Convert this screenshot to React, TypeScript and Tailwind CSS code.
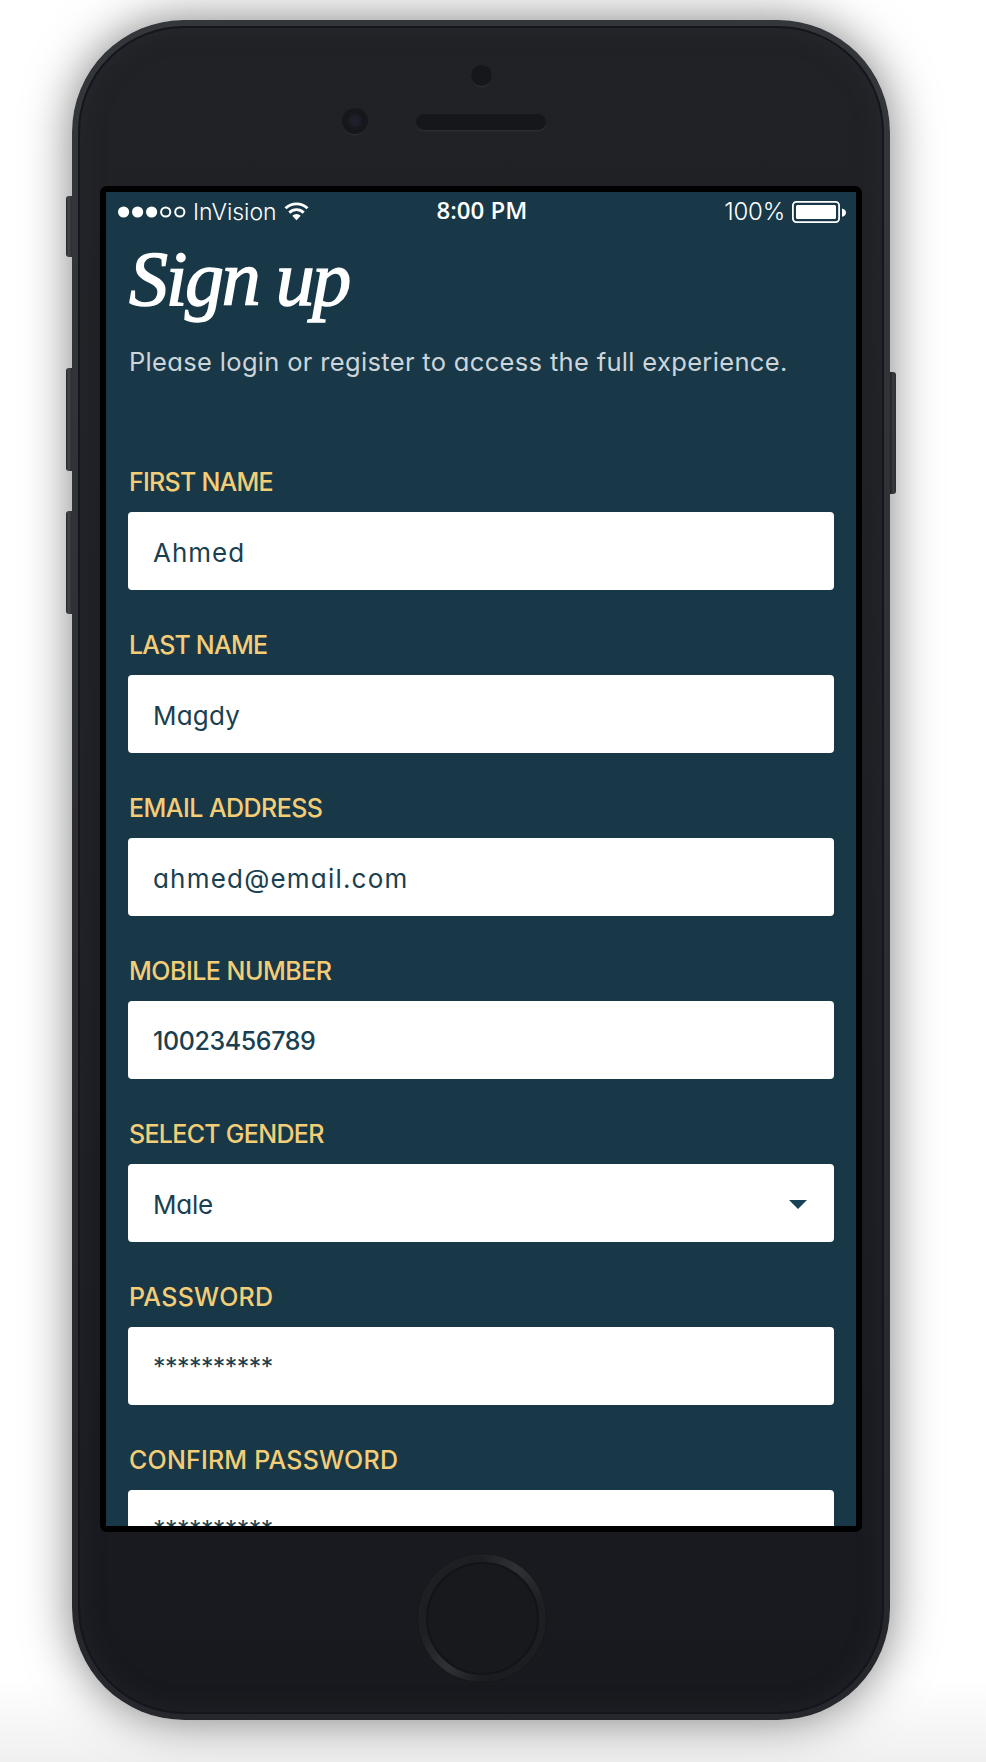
type Field = {
  label: string;
  labelStyle: string;
  value: string;
  valueStyle: string;
  select?: boolean;
};

const fields: Field[] = [
  { label: "FIRST NAME", labelStyle: "tracking-[-0.75px]", value: "Ahmed", valueStyle: "text-[26px] tracking-[1px]" },
  { label: "LAST NAME", labelStyle: "tracking-[-0.8px]", value: "Magdy", valueStyle: "text-[26px] tracking-[0.2px]" },
  { label: "EMAIL ADDRESS", labelStyle: "tracking-[-0.55px]", value: "ahmed@email.com", valueStyle: "text-[26px] tracking-[1.2px]" },
  { label: "MOBILE NUMBER", labelStyle: "tracking-[-0.5px]", value: "10023456789", valueStyle: "text-[25px] font-medium tracking-[-0.4px]" },
  { label: "SELECT GENDER", labelStyle: "tracking-[-0.7px]", value: "Male", valueStyle: "text-[26px] tracking-[-0.2px]", select: true },
  { label: "PASSWORD", labelStyle: "tracking-[0.25px]", value: "**********", valueStyle: "text-[25px] tracking-[-0.55px]" },
  { label: "CONFIRM PASSWORD", labelStyle: "tracking-[0.2px]", value: "**********", valueStyle: "text-[25px] tracking-[-0.55px]" },
];

function StatusBar() {
  return (
    <div className="grid h-[39px] grid-cols-3 grid-rows-[39px] items-center pl-3 pr-[10px] text-[23px] leading-8 text-white">
      <div className="flex items-center">
        <svg width="68" height="12" viewBox="0 0 68 12" fill="white">
          <circle cx="5.6" cy="6" r="5.6" />
          <circle cx="19.6" cy="6" r="5.6" />
          <circle cx="33.6" cy="6" r="5.6" />
          <circle cx="47.7" cy="6" r="4.6" fill="none" stroke="white" strokeWidth="2" />
          <circle cx="61.8" cy="6" r="4.6" fill="none" stroke="white" strokeWidth="2" />
        </svg>
        <span className="ml-[7px] pt-px font-light">InVision</span>
        <svg className="mb-px ml-[7px]" width="25" height="19" viewBox="0 0 25 19" fill="none" stroke="white">
          <path d="M1.5 6.3 A15.8 15.8 0 0 1 23.5 6.3" strokeWidth="2.9" />
          <path d="M5.3 10.6 A10.3 10.3 0 0 1 19.7 10.6" strokeWidth="2.9" />
          <path d="M12.5 18.3 L8.3 13.8 A6 6 0 0 1 16.7 13.8 Z" fill="white" stroke="none" />
        </svg>
      </div>
      <div className="pb-[3px] text-center font-['Open_Sans',sans-serif] text-[24px] font-semibold">8:00 PM</div>
      <div className="flex items-center justify-end">
        <span className="mr-[7px] pt-px text-[24px] font-light tracking-[-0.2px]">100%</span>
        <svg width="54" height="22" viewBox="0 0 54 22" fill="white">
          <rect x="0.9" y="0.9" width="46.2" height="20.2" rx="3.5" fill="none" stroke="white" strokeWidth="1.8" />
          <rect x="4" y="4" width="40" height="14" rx="1.5" />
          <path d="M50 7.5 Q54 8.5 54 11.5 Q54 14.8 50 15.8 Z" />
        </svg>
      </div>
    </div>
  );
}

export default function App() {
  return (
    <div className="relative flex h-[1762px] w-[986px] flex-col overflow-hidden bg-white bg-[linear-gradient(to_bottom,#fff_0px,#fff_1680px,#f0f0f0_1762px)] pl-[72px] pt-5 font-['Inter',sans-serif] [font-feature-settings:'cv11']">
      <div className="relative h-[1700px] w-[818px] rounded-[112px] bg-[linear-gradient(to_bottom,#33373b,#2c2e33_50%,#26272d)] p-[6px] shadow-[0_0_48px_rgba(0,0,0,0.5)]">
        <div className="absolute -left-[6px] top-[176px] h-[61px] w-[6px] rounded-l-[3px] bg-[linear-gradient(to_right,#26282c,#44474b_45%,#2a2c30)]" />
        <div className="absolute -left-[6px] top-[348px] h-[103px] w-[6px] rounded-l-[3px] bg-[linear-gradient(to_right,#26282c,#44474b_45%,#2a2c30)]" />
        <div className="absolute -left-[6px] top-[491px] h-[103px] w-[6px] rounded-l-[3px] bg-[linear-gradient(to_right,#26282c,#44474b_45%,#2a2c30)]" />
        <div className="absolute -right-[6px] top-[352px] h-[122px] w-[6px] rounded-r-[3px] bg-[linear-gradient(to_right,#1f2124,#3a3d40_55%,#2a2c30)]" />
        <div className="flex h-full flex-col items-center rounded-[106px] border-2 border-[#15161b] bg-[linear-gradient(to_bottom,#212226,#1e1f24_50%,#18191e)] shadow-[inset_0_0_24px_rgba(50,55,65,0.35)]">
          <div className="relative h-[158px] w-full">
            <div className="absolute left-[391px] top-[37px] size-[21px] rounded-full bg-[#16171b] shadow-[0_1.5px_0_#2b2c30]" />
            <div className="absolute left-[262px] top-[80px] size-[26px] rounded-full bg-[radial-gradient(circle,#1e212d_0px,#1c1e28_5px,#16171b_8px)] shadow-[0_1.5px_0_#2b2c30]" />
            <div className="absolute left-[336px] top-[86px] h-4 w-[130px] rounded-full bg-[#16171b] shadow-[0_1.5px_0_#2b2c30]" />
          </div>
          <div className="h-[1346px] w-[762px] shrink-0 rounded-[7px] bg-black p-[6px]">
            <div className="h-[1334px] overflow-hidden bg-[#183848]">
              <StatusBar />
              <div className="flex flex-col px-[22px]">
                <h1 className="mt-[3px] h-[90px] pl-px font-['Liberation_Serif',serif] text-[78px] leading-[90px] tracking-[-2.3px] text-white italic [-webkit-text-stroke:1.4px_white]">Sign up</h1>
                <p className="mt-[18px] h-10 pl-px text-[25.5px] leading-10 tracking-[0.33px] whitespace-nowrap text-[#cdd5da]">Please login or register to access the full experience.</p>
                <div className="mt-[81px] flex flex-col">
                  {fields.map((f) => (
                    <label key={f.label} className="flex h-[163px] shrink-0 flex-col">
                      <span className={`h-[49px] pl-px text-[25px] leading-[38px] font-medium text-[#f4cd77] ${f.labelStyle}`}>{f.label}</span>
                      <span className="flex h-[78px] items-center justify-between rounded-[4px] bg-white pl-[25px] pr-[27px] pt-[3px] text-[#193f50]">
                        <span className={f.valueStyle}>{f.value}</span>
                        {f.select && (
                          <svg width="18" height="9" viewBox="0 0 18 9" fill="#1a4257">
                            <path d="M0 0H18L9 9Z" />
                          </svg>
                        )}
                      </span>
                    </label>
                  ))}
                </div>
              </div>
            </div>
          </div>
          <div className="ml-[2px] mt-[21px] flex size-[130px] shrink-0 items-center justify-center rounded-full border border-[#16171b] bg-[conic-gradient(from_0deg,#1e1f23,#303135_35deg,#1e1f23_75deg,#1b1c20_180deg,#303135_215deg,#1e1f23_255deg,#1e1f23)]">
            <div className="size-[113px] rounded-full border-2 border-[#131418] bg-[#18191d]" />
          </div>
        </div>
      </div>
    </div>
  );
}
